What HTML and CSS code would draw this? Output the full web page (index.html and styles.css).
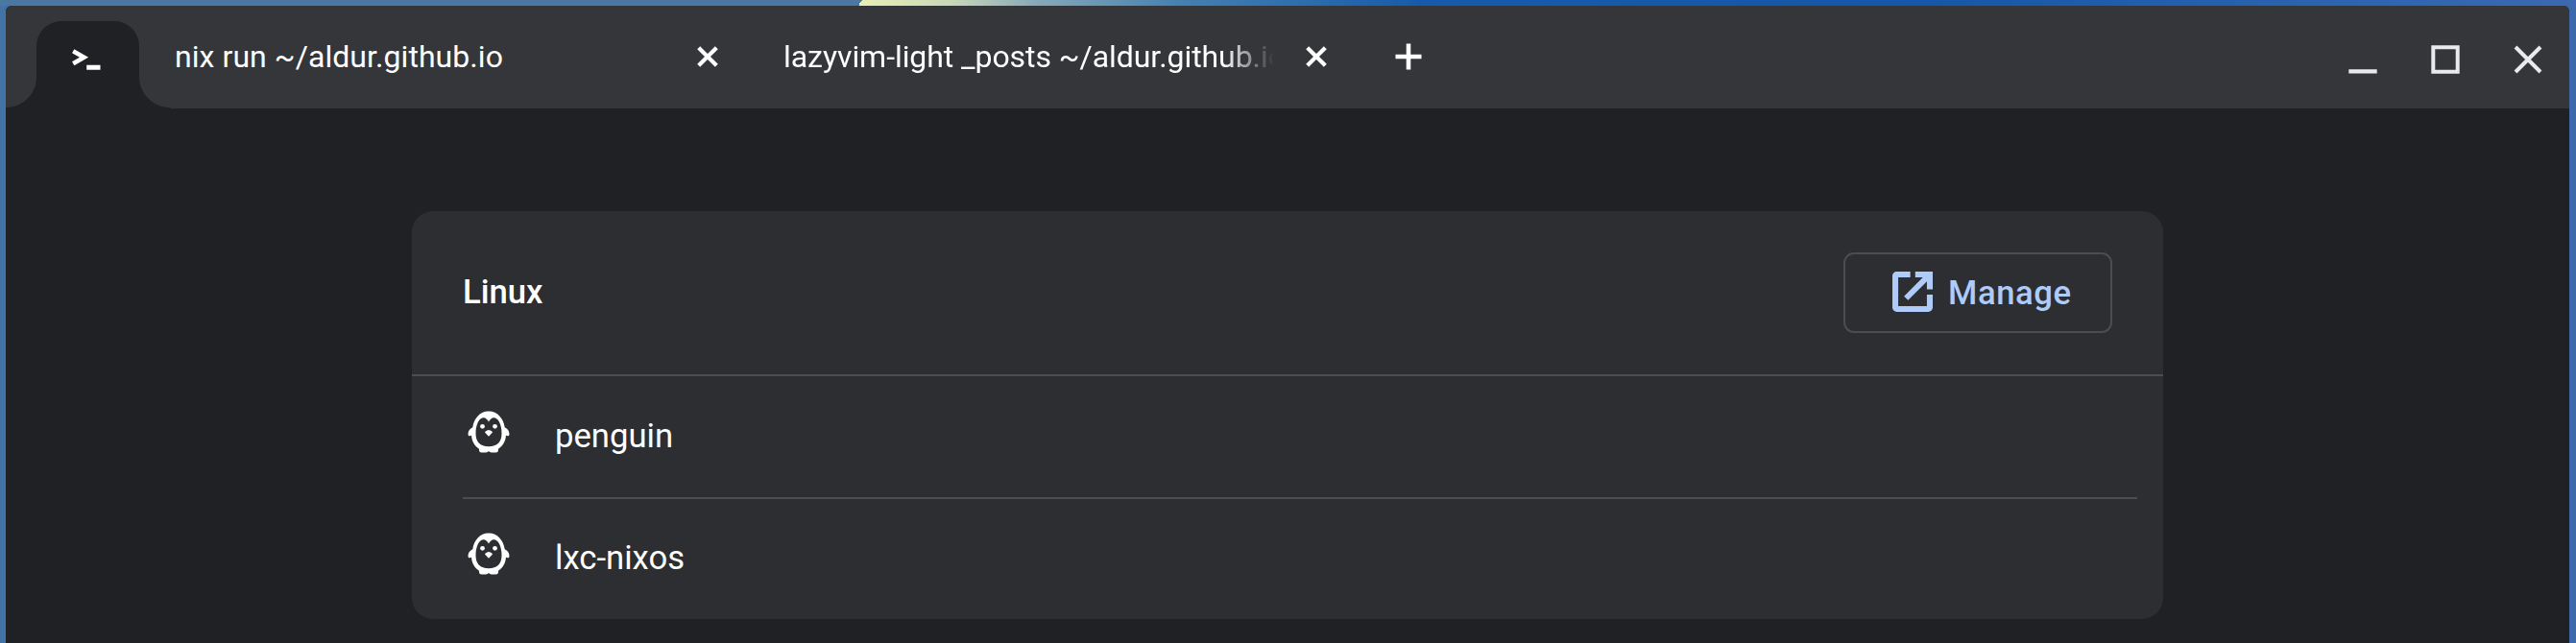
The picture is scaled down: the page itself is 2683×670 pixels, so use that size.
FILE: index.html
```
<!DOCTYPE html>
<html lang="en">
<head>
<meta charset="utf-8">
<title>Terminal</title>
<link rel="stylesheet" href="styles.css">
</head>
<body>
<svg class="defs" aria-hidden="true">
  <symbol id="penguin" viewBox="0 0 44 44">
    <path fill="currentColor" fill-rule="evenodd" d="M22 0.5C13 0.5 6.500 8 5.300 17.300C2.500 18.500 0.500 21 0.500 24.500C0.500 26.200 2 26.800 4 25.800C4.500 32 7.500 37 12 39.800C11.800 42 12.500 43.400 14.500 43.400H19C20.500 43.400 21.500 43 22 41.800C22.500 43 23.500 43.400 25 43.400H29.500C31.500 43.400 32.200 42 32 39.800C36.500 37 39.500 32 40 25.800C42 26.800 43.500 26.200 43.500 24.500C43.500 21 41.500 18.500 38.700 17.300C37.500 8 31 0.500 22 0.500ZM22 11.500C23.500 9 25.200 7.300 27.300 7.300C31.700 7.300 35.500 14 35.500 23.500C35.500 32.500 31 37.200 22 37.200C13 37.200 8.500 32.500 8.500 23.500C8.500 14 12.300 7.300 16.700 7.300C18.800 7.300 20.500 9 22 11.500Z"/>
    <circle fill="currentColor" cx="15.500" cy="16.300" r="2.400"/>
    <circle fill="currentColor" cx="28.500" cy="16.300" r="2.400"/>
    <path fill="currentColor" d="M18.600 21.600Q22 18.400 25.400 21.600Q26.200 22.400 25.400 23.300L22 26.800L18.600 23.300Q17.800 22.400 18.600 21.600Z"/>
  </symbol>
  <symbol id="close" viewBox="0 0 22 22">
    <path fill="none" stroke="currentColor" stroke-width="4.200" d="M1.700 1.700L20.300 20.300M20.300 1.700L1.700 20.300"/>
  </symbol>
</svg>
<div class="window">
  <header class="titlebar">
    <div class="tab-home">
      <svg class="prompt" viewBox="0 0 30 24"><path fill="none" stroke="currentColor" stroke-width="4.600" d="M1.200 2.200L12.500 8.700L1.200 15.200"/><path fill="currentColor" d="M15.200 16.700h14.300v5h-14.300z"/></svg>
    </div>
    <div class="tab">
      <span class="tab-title">nix run ~/aldur.github.io</span>
      <svg class="tab-close"><use href="#close"/></svg>
    </div>
    <div class="tab">
      <span class="tab-title faded">lazyvim-light _posts ~/aldur.github.io</span>
      <svg class="tab-close"><use href="#close"/></svg>
    </div>
    <svg class="plus" viewBox="0 0 28 28"><path fill="currentColor" d="M11.700 0.500h4.600v11.200h11.200v4.600h-11.200v11.200h-4.600v-11.200h-11.200v-4.600h11.200z"/></svg>
    <div class="controls">
      <svg viewBox="0 0 30 30"><path fill="currentColor" d="M0.300 25.300h29.400v4.200h-29.400z"/></svg>
      <svg viewBox="0 0 30 30"><path fill="none" stroke="currentColor" stroke-width="4" d="M2.300 2.300h25.400v25.400h-25.400z"/></svg>
      <svg viewBox="0 0 30 30"><path fill="none" stroke="currentColor" stroke-width="4" d="M2 2L28 28M28 2L2 28"/></svg>
    </div>
  </header>
  <main class="content">
    <section class="card">
      <div class="card-header">
        <h1 class="heading">Linux</h1>
        <button class="manage">
          <svg class="manage-icon" viewBox="3 3 18 18"><path fill="currentColor" d="M19 18.400H5.600V5.600H11V3H5c-1.110 0-2 .9-2 2v14c0 1.100.89 2 2 2h14c1.100 0 2-.9 2-2v-5.700h-2.600V18.400zM13.200 3v2.600h3.400L8.200 14l1.800 1.800L18.400 7.400v3.500H21V3z"/></svg>
          <span>Manage</span>
        </button>
      </div>
      <ul class="list">
        <li class="row"><svg class="penguin"><use href="#penguin"/></svg><span>penguin</span></li>
        <li class="row"><svg class="penguin"><use href="#penguin"/></svg><span>lxc-nixos</span></li>
      </ul>
    </section>
  </main>
</div>
</body>
</html>
```
FILE: styles.css
```
* { box-sizing: border-box; }

body {
  margin: 0;
  width: 2683px;
  height: 670px;
  padding: 6px 7px 0 6px;
  overflow: hidden;
  font-family: Roboto, sans-serif;
  font-size: 34.67px;
  color: #fff;
  background:
    linear-gradient(125deg, #4a78a2 0 4px, transparent 4px) 893px 0 / 12px 6px no-repeat,
    linear-gradient(90deg, #4a78a2 0 895px, #e9efb4 895px, #c9d8b8 990px, #86a9b8 1080px, #4480b0 1230px, #165bab 1480px, #1557a8 2000px, #2f66b2 2500px, #3c69b0) 0 0 / 100% 6px no-repeat,
    linear-gradient(90deg, #4373a6 50%, #3d69ac 50%);
}

.defs { position: absolute; width: 0; height: 0; }
svg { display: block; flex: none; }

.window {
  height: 664px;
  border-radius: 6px 6px 0 0;
  overflow: hidden;
  background: #202124;
}

.titlebar {
  display: flex;
  height: 107px;
  padding-left: 32px;
  background: #35363a;
}

.tab-home {
  position: relative;
  display: flex;
  width: 107px;
  height: 91px;
  margin-top: 16px;
  padding: 29px 0 0 37px;
  border-radius: 26px 26px 0 0;
  background: #202124;
}
.tab-home::before,
.tab-home::after {
  content: "";
  position: absolute;
  bottom: 0;
  width: 32px;
  height: 33px;
}
.tab-home::before { right: 100%; background: radial-gradient(circle at 0 0, transparent 31.5px, #202124 32.5px); }
.tab-home::after { left: 100%; background: radial-gradient(circle at 100% 0, transparent 31.5px, #202124 32.5px); }
.prompt { width: 30px; height: 24px; }

.tab {
  display: flex;
  width: 634px;
  padding: 33px 0 0 37px;
}
.tab-title {
  width: 512px;
  height: 42px;
  line-height: 40px;
  font-size: 32px;
  letter-spacing: 0.06px;
  white-space: nowrap;
}
.faded {
  letter-spacing: -0.06px;
  -webkit-mask-image: linear-gradient(90deg, #000 458px, transparent 511px);
  mask-image: linear-gradient(90deg, #000 458px, transparent 511px);
}
.tab-close { width: 22px; height: 22px; margin: 9px 0 0 32px; }
.plus { width: 28px; height: 28px; margin: 39px 0 0 40px; }

.controls {
  display: flex;
  gap: 56px;
  margin: 41px 28px 0 auto;
  color: #e8eaed;
}
.controls svg { width: 30px; height: 30px; }

.content { padding: 107px 0 0 423px; }
.card {
  width: 1824px;
  height: 425px;
  border-radius: 22px;
  background: #2d2e31;
}
.card-header {
  display: flex;
  align-items: center;
  justify-content: space-between;
  height: 172px;
  padding: 0 53px;
  border-bottom: 2px solid #4c4d50;
}
.heading { margin: 0; padding-bottom: 2px; font-size: 34.67px; font-weight: 500; line-height: 40px; }
.manage {
  display: flex;
  align-items: center;
  width: 280px;
  height: 84px;
  padding: 0 0 0 49px;
  border: 2px solid #4c4d50;
  border-radius: 11px;
  background: none;
  color: #aecbfa;
  font: 500 34.67px/40px Roboto, sans-serif;
  letter-spacing: 0.6px;
}
.manage-icon { width: 42px; height: 42px; margin: 0 16px 3px 0; }

.list { margin: 0; padding: 0 27px 0 53px; list-style: none; }
.row {
  display: flex;
  height: 127px;
  padding-top: 35px;
}
.row:first-child {
  height: 128px;
  padding-top: 36px;
  border-bottom: 2px solid #4c4d50;
}
.row span { margin: 6px 0 0 47px; line-height: 40px; }
.penguin { width: 44px; height: 44px; margin-left: 5px; }
```
